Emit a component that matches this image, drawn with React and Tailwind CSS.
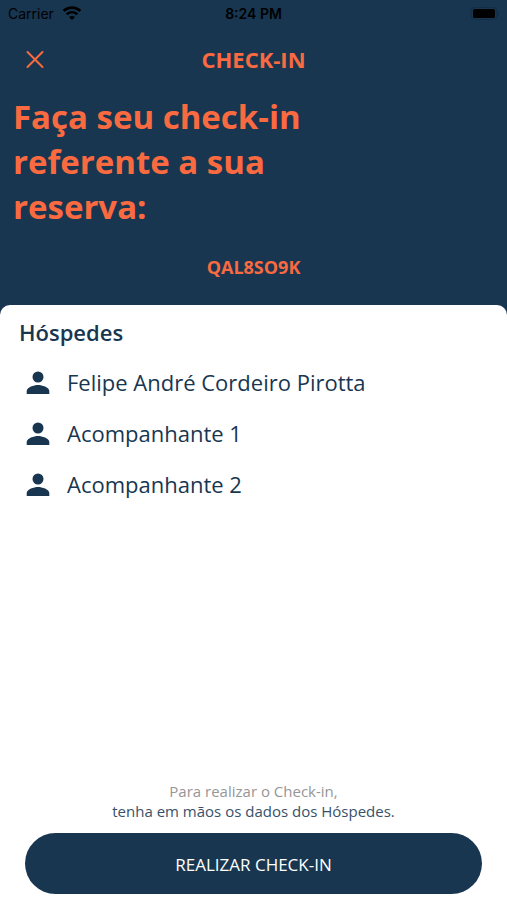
const guests = ["Felipe André Cordeiro Pirotta", "Acompanhante 1", "Acompanhante 2"];

function StatusBar() {
  return (
    <div className="grid h-7 grid-cols-3 items-center px-2 font-['Inter','Liberation_Sans',sans-serif] text-sm text-black">
      <div className="flex items-center gap-2">
        <span>Carrier</span>
        <svg className="h-4 w-5" viewBox="0 0 20 16" fill="none" aria-hidden="true">
          <path d="M1.6 5C6.4 .5 13.6 .5 18.4 5" stroke="currentColor" strokeWidth="2.6" />
          <path d="M4.7 8.300C7.8 5.500 12.2 5.500 15.3 8.300" stroke="currentColor" strokeWidth="2.4" />
          <path d="M10 14L7 11C8.7 9.500 11.3 9.500 13 11Z" fill="currentColor" />
        </svg>
      </div>
      <span className="text-center font-semibold">8:24 PM</span>
      <svg className="h-4 w-8 justify-self-end" viewBox="0 0 32 16" aria-hidden="true">
        <rect x="4" y="1.5" width="26" height="12" rx="3.5" fill="none" stroke="#122d45" />
        <rect x="6" y="3" width="22" height="9" rx="1.5" fill="#000" />
        <path d="M31 5.5C32 6 32 9 31 9.5Z" fill="#122d45" />
      </svg>
    </div>
  );
}

function PersonIcon() {
  return (
    <svg className="size-6 shrink-0" viewBox="0 0 24 24" fill="currentColor" aria-hidden="true">
      <circle cx="12" cy="6" r="5.5" />
      <path d="M.7 23V20C.7 16.3 8.1 14 12 14S23.3 16.3 23.3 20V23Z" />
    </svg>
  );
}

export default function App() {
  return (
    <div className="flex min-h-screen flex-col bg-[#183650] font-['Open_Sans','Noto_Sans',sans-serif] text-[#183650]">
      <StatusBar />
      <header className="text-[#f96a41]">
        <div className="grid h-[62px] grid-cols-[1fr_auto_1fr] items-center px-6">
          <button type="button" aria-label="Fechar" className="w-fit">
            <svg className="size-6" viewBox="0 0 24 24" fill="none" stroke="currentColor" strokeWidth="2" strokeLinecap="round" aria-hidden="true">
              <path d="M3.5 5L18.5 20M18.5 5L3.5 20" />
            </svg>
          </button>
          <span className="text-[22px] font-bold">CHECK-IN</span>
        </div>
        <h1 className="max-w-80 pl-[13px] pt-1 text-[33px] font-bold leading-[45px]">
          Faça seu check-in referente a sua reserva:
        </h1>
        <p className="py-6 text-center text-lg font-bold">QAL8SO9K</p>
      </header>
      <main className="flex grow flex-col rounded-t-[10px] bg-white pb-1.5">
        <h2 className="px-[19px] pt-3 text-[22px] font-semibold leading-[30px]">Hóspedes</h2>
        <ul className="pt-2.5 text-[22px]">
          {guests.map((guest) => (
            <li key={guest} className="flex h-[51px] items-center gap-[17px] px-[26px]">
              <PersonIcon />
              <span>{guest}</span>
            </li>
          ))}
        </ul>
        <div className="mt-auto px-[25px]">
          <p className="pb-3 text-center text-[15px] leading-5 text-[#38516a]">
            <span className="block text-[#969696]">Para realizar o Check-in,</span>
            tenha em mãos os dados dos Hóspedes.
          </p>
          <button type="button" className="h-[61px] w-full rounded-full bg-[#183650] pt-0.5 text-[17px] text-white">
            REALIZAR CHECK-IN
          </button>
        </div>
      </main>
    </div>
  );
}
